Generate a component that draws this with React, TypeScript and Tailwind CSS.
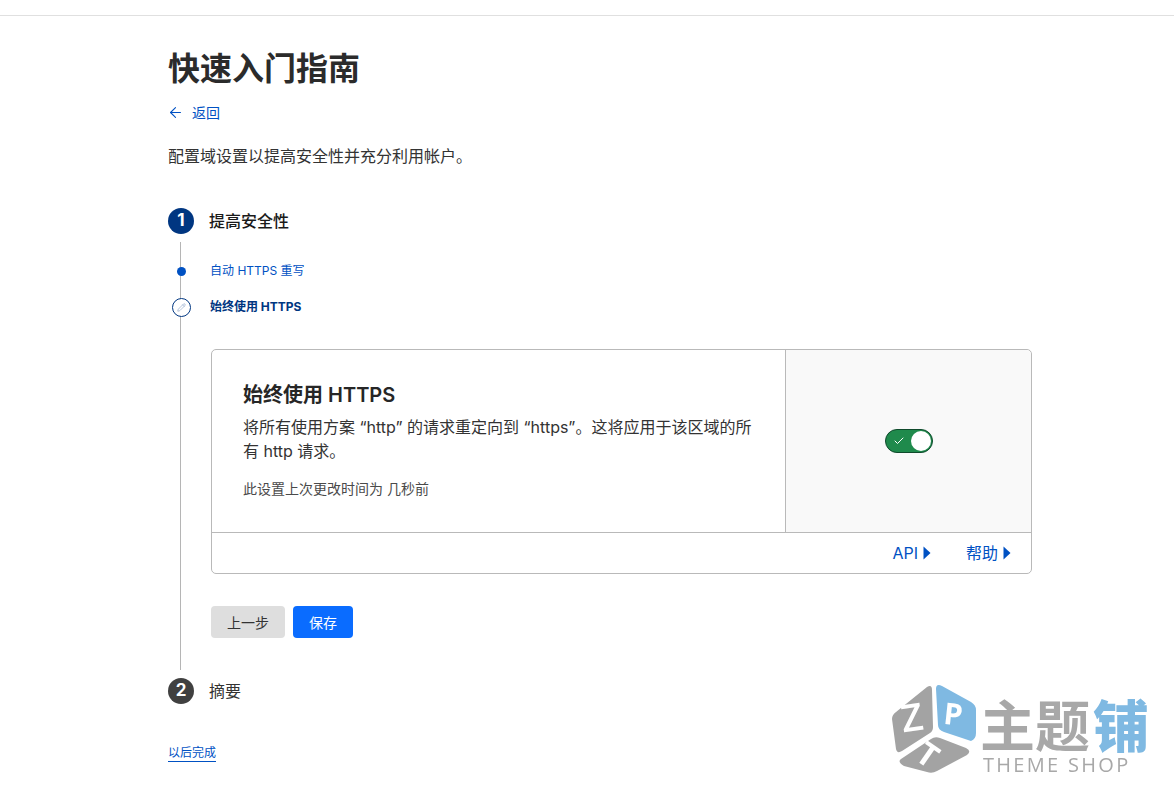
import React from 'react';
import { ArrowLeft, Check, Pencil } from 'lucide-react';

const fontStack = "font-['Inter','Noto_Sans_CJK_SC',sans-serif]";

const Triangle = () => (
  <svg width="8" height="14" viewBox="0 0 8 14" className="ml-[5px]">
    <path d="M0.5 0.5 L7.5 7 L0.5 13.5 Z" fill="#0051c3" />
  </svg>
);

const StepBadge: React.FC<{ n: number; className: string }> = ({ n, className }) => (
  <div className={`w-[26px] h-[26px] rounded-full flex items-center justify-center text-white text-[17px] font-bold ${className}`}>
    {n}
  </div>
);

// Watermark sitting on top of the page, bottom right
const Watermark = () => (
  <svg width="280" height="120" viewBox="0 0 280 120" className="absolute left-[880px] top-[675px] blur-[0.5px]">
    <path d="M12 44 Q12 40 16 37 L47 12 Q52 9 52 15 L53 52 Q53 56 50 58 L22 76 Q17 79 16 74 Z" fill="#a3a3a3" />
    <path d="M56 14 Q56 8 62 11 L91 27 Q96 30 96 35 L96 58 Q96 64 91 66 L64 57 Q58 55 58 50 Z" fill="#7fb9e2" />
    <path d="M21 84 L51 64 Q55 61 60 63 L86 73 Q92 76 87 80 L57 96 Q52 99 47 97 L24 91 Q17 87 21 84 Z" fill="#a3a3a3" />
    <text x="21" y="56" fontSize="38" fontWeight="600" fill="#fff" fontFamily="Open Sans" transform="rotate(-8 32 42)">Z</text>
    <text x="64" y="50" fontSize="30" fontWeight="700" fill="#fff" fontFamily="Open Sans" transform="rotate(6 75 38)">P</text>
    <text x="38" y="94" fontSize="32" fontWeight="700" fill="#fff" fontFamily="Open Sans" transform="rotate(35 52 82)">T</text>
    <text x="100" y="71" fontSize="55" fontWeight="700" fill="#a8a8a8" fontFamily="Noto Sans CJK SC">主题</text>
    <text x="213" y="72" fontSize="56" fontWeight="900" fill="#7fb9e2" fontFamily="Noto Sans CJK SC">铺</text>
    <text x="103" y="97" fontSize="20" fill="#a8a8a8" letterSpacing="2.3" fontFamily="Open Sans">THEME SHOP</text>
  </svg>
);

export default function App() {
  return (
    <div className={`relative h-[805px] overflow-hidden bg-white text-[#222] ${fontStack}`}>
      <div className="h-[16px] border-b border-[#e0e0e0]" />

      <div className="pl-[168px] w-[1032px]">
        <h1 className="mt-[33px] text-[32px] leading-[40px] font-bold text-[#2b2b2b]">快速入门指南</h1>

        <a className="mt-[13px] flex items-center h-[20px] text-[14px] text-[#0051c3]">
          <ArrowLeft size={17} strokeWidth={1.5} className="-ml-[1px] mr-[8px]" />
          返回
        </a>

        <p className="mt-[22px] text-[16px] leading-[24px] text-[#333]">配置域设置以提高安全性并充分利用帐户。</p>

        <div className="mt-[40px] flex items-center h-[26px]">
          <StepBadge n={1} className="bg-[#003681]" />
          <span className="ml-[15px] text-[16px] font-medium text-[#1a1a1a]">提高安全性</span>
        </div>

        <div className="mt-[8px] ml-[12px] border-l border-[#b5b5b5] pl-[30px] pt-[20px] pb-[32px]">
          <div className="-ml-[39px] flex items-center h-[18px]">
            <div className="w-[18px] flex justify-center">
              <div className="w-[9px] h-[9px] rounded-full bg-[#0051c3]" />
            </div>
            <span className="ml-[20px] text-[12px] text-[#0051c3]">自动 HTTPS 重写</span>
          </div>

          <div className="-ml-[39px] mt-[18px] flex items-center h-[18px]">
            <div className="w-[19px] h-[19px] rounded-full border border-[#003681] bg-white flex items-center justify-center">
              <Pencil size={9} strokeWidth={1.5} className="text-[#7d97c0]" />
            </div>
            <span className="ml-[19px] text-[12px] font-bold text-[#003681]">始终使用 HTTPS</span>
          </div>

          <div className="mt-[33px] h-[225px] rounded-[5px] border border-[#b9b9b9] flex flex-col">
            <div className="flex h-[183px] border-b border-[#b9b9b9]">
              <div className="w-[574px] border-r border-[#b9b9b9] pl-[31px] pr-[32px] pt-[31px]">
                <h2 className="text-[20px] leading-[28px] font-semibold text-[#262626]">始终使用 HTTPS</h2>
                <p className="mt-[6px] text-[16px] leading-[24px] text-[#333]">
                  将所有使用方案 “http” 的请求重定向到 “https”。这将应用于该区域的所有 http 请求。
                </p>
                <p className="mt-[17px] text-[14px] leading-[18px] text-[#4a4a4a]">此设置上次更改时间为 几秒前</p>
              </div>
              <div className="flex-1 bg-[#f9f9f9] rounded-tr-[5px] flex items-center justify-center">
                <div className="w-[48px] h-[24px] rounded-full bg-[#1f8a4c] border border-[#0f4a2c] flex items-center justify-between pl-[7px] pr-px -mt-[1px]">
                  <Check size={12} strokeWidth={2} className="text-white" />
                  <div className="w-[20px] h-[20px] rounded-full bg-white" />
                </div>
              </div>
            </div>
            <div className="flex-1 flex items-center justify-end pr-[20px] text-[16px] text-[#0051c3]">
              <a className="flex items-center">API<Triangle /></a>
              <a className="flex items-center ml-[35px]">帮助<Triangle /></a>
            </div>
          </div>

          <div className="mt-[32px] flex gap-[8px]">
            <button className="w-[74px] h-[32px] rounded-[4px] bg-[#dedede] text-[14px] text-[#333]">上一步</button>
            <button className="w-[60px] h-[32px] rounded-[4px] bg-[#0a6cff] text-[14px] text-white">保存</button>
          </div>
        </div>

        <div className="mt-[8px] flex items-center h-[26px]">
          <StepBadge n={2} className="bg-[#404040]" />
          <span className="ml-[15px] text-[16px] text-[#333]">摘要</span>
        </div>

        <a className="mt-[41px] inline-block text-[12px] leading-[16px] text-[#0051c3] border-b border-[#0051c3]">以后完成</a>
      </div>

      <Watermark />
    </div>
  );
}
